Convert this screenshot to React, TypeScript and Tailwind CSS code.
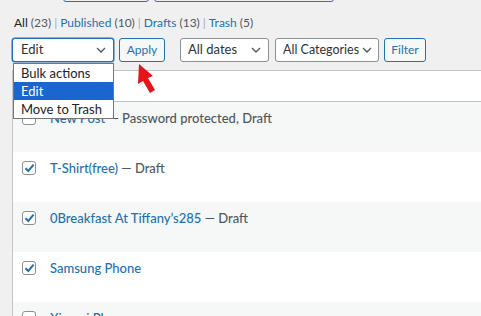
import React from 'react';

const rows = [
  { title: 'New Post', state: ' — Password protected, Draft', checked: false },
  { title: 'T-Shirt(free)', state: ' — Draft', checked: true },
  { title: '0Breakfast At Tiffany’s285', state: ' — Draft', checked: true },
  { title: 'Samsung Phone', state: '', checked: true },
  { title: 'Xiaomi Phone', state: '', checked: false },
];

const Chevron = () => (
  <svg width="10" height="6" viewBox="0 0 10 6" fill="none" className="shrink-0">
    <path d="M1 1l4 4 4-4" stroke="#50575e" strokeWidth="1.3" />
  </svg>
);

const Checkbox = ({ checked }: { checked: boolean }) => (
  <div className="w-[14px] h-[14px] shrink-0 rounded-[3px] border border-[#8c8f94] bg-white flex items-center justify-center">
    {checked && (
      <svg width="11" height="10" viewBox="0 0 11 10">
        <path d="M1.5 5.2l2.8 2.8L9.6 1.6" stroke="#2271b1" strokeWidth="2" fill="none" />
      </svg>
    )}
  </div>
);

export default function App() {
  return (
    <div className="relative w-[481px] h-[316px] overflow-hidden bg-[#f0f0f1] text-[#2c3338] font-['Lato','Noto_Sans',sans-serif]">
      {/* top buttons, cut off */}
      <div className="flex gap-[5px] pl-[63px] -mt-[28px]">
        <div className="w-[86px] h-[30px] rounded-[3px] border border-[#2271b1]" />
        <div className="w-[180px] h-[30px] rounded-[3px] border border-[#6f4fc4]" />
      </div>

      {/* status links */}
      <div className="mt-[13px] pl-[14px] text-[12px] leading-[16px] flex items-center gap-[3px] text-[#50575e] whitespace-nowrap">
        <span>
          <span className="text-[#1d2327]">All</span> (23)
        </span>
        <span className="text-[#a7aaad]">|</span>
        <span className="text-[#2271b1]">
          Published <span className="text-[#50575e]">(10)</span>
        </span>
        <span className="text-[#a7aaad]">|</span>
        <span className="text-[#2271b1]">
          Drafts <span className="text-[#50575e]">(13)</span>
        </span>
        <span className="text-[#a7aaad]">|</span>
        <span className="text-[#2271b1]">
          Trash <span className="text-[#50575e]">(5)</span>
        </span>
      </div>

      {/* filter bar */}
      <div className="mt-[7px] pl-[12px] flex items-center h-[24px] text-[13px] whitespace-nowrap">
        <div className="w-[102px] h-[24px] rounded-[3px] border border-[#2271b1] shadow-[0_0_0_0.5px_#2271b1] bg-white flex items-center justify-between pl-[8px] pr-[7px]">
          <span>Edit</span>
          <Chevron />
        </div>
        <div className="ml-[5px] w-[46px] h-[24px] rounded-[3px] border border-[#2271b1] bg-[#f6f7f7] text-[#2271b1] flex items-center justify-center text-[12px]">
          Apply
        </div>
        <div className="ml-[15px] w-[89px] h-[24px] rounded-[3px] border border-[#8c8f94] bg-white flex items-center justify-between pl-[7px] pr-[7px]">
          <span>All dates</span>
          <Chevron />
        </div>
        <div className="ml-[6px] w-[104px] h-[24px] rounded-[3px] border border-[#8c8f94] bg-white flex items-center justify-between pl-[7px] pr-[6px]">
          <span className="text-[12.5px]">All Categories</span>
          <Chevron />
        </div>
        <div className="ml-[5px] w-[42px] h-[24px] rounded-[3px] border border-[#2271b1] bg-[#f6f7f7] text-[#2271b1] flex items-center justify-center text-[12px]">
          Filter
        </div>
      </div>

      {/* posts table */}
      <div className="mt-[8px] ml-[12px] border-l border-t border-[#c3c4c7] bg-white">
        <div className="h-[31px] border-b border-[#c3c4c7] bg-white" />
        {rows.map((r, i) => (
          <div
            key={r.title}
            className={`h-[50px] flex items-start pl-[9px] pt-[9px] gap-[14px] ${i % 2 === 0 ? 'bg-[#f6f7f7]' : 'bg-white'}`}
          >
            <Checkbox checked={r.checked} />
            <div className="text-[13px] leading-[14px] font-medium text-[#50575e] whitespace-nowrap">
              <span className="text-[#2271b1]">{r.title}</span>
              {r.state}
            </div>
          </div>
        ))}
      </div>

      {/* open select list */}
      <div className="absolute left-[13px] top-[63px] w-[101px] bg-white border border-[#767676] text-[13px] leading-[18px] text-[#1d2327]">
        <div className="px-[7px]">Bulk actions</div>
        <div className="px-[7px] bg-[#1a65d0] text-white">Edit</div>
        <div className="px-[7px]">Move to Trash</div>
      </div>

      {/* red pointer arrow */}
      <svg className="absolute left-[130px] top-[60px]" width="30" height="40" viewBox="130 60 30 40">
        <polygon points="139,64 153,76 148,78 155,90 150,93 143,81 138,84" fill="#e8141c" />
      </svg>
    </div>
  );
}
